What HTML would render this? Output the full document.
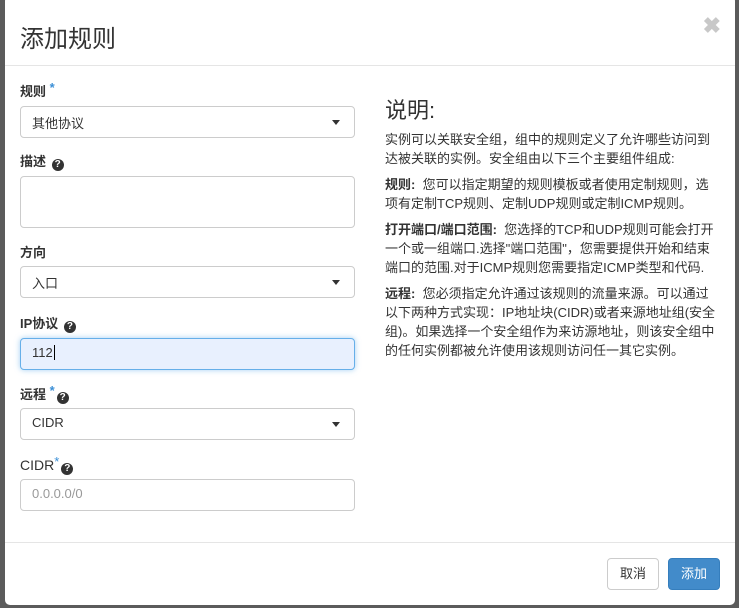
<!DOCTYPE html>
<html><head><meta charset="utf-8"><style>
*{box-sizing:border-box;margin:0;padding:0}
body{width:739px;height:608px;background:#5b5b5b;font-family:"Liberation Sans","Noto Sans CJK SC",sans-serif;color:#333;position:relative;overflow:hidden}
.modal{position:absolute;left:5px;top:-4px;width:730px;height:609px;background:#fff;border-radius:5px}
.hdr{position:absolute;left:0;top:0;width:100%;height:70px;border-bottom:1px solid #e5e5e5}
.hdr h1{position:absolute;left:15px;top:23px;font-size:24px;font-weight:normal;color:#333}
.close{position:absolute;right:14px;top:17px;font-size:22px;font-weight:bold;color:#c8c8c8}
.lbl{position:absolute;left:15px;font-size:13px;font-weight:bold;color:#333}
.star{color:#3b8fd6;font-size:13px;vertical-align:4px}
.q{display:inline-block;width:12px;height:12px;border-radius:50%;background:#333;color:#fff;font-size:10px;text-align:center;line-height:12px;vertical-align:-1px;font-weight:bold;margin-left:2px}
.inp{position:absolute;left:15px;width:335px;height:32px;border:1px solid #ccc;border-radius:4px;font-size:13px;padding:6px 11px;color:#333}
.caret{position:absolute;right:14px;top:13px;width:0;height:0;border-left:4px solid transparent;border-right:4px solid transparent;border-top:5px solid #333}
.focus{background:#e8f0fe;border-color:#66afe9;box-shadow:0 0 6px rgba(102,175,233,.6)}
.right{position:absolute;left:380px;top:100px;width:336px;font-size:13px;line-height:19px;color:#333}
.right h2{font-size:22px;font-weight:normal;margin-bottom:4px;line-height:30px}
.right p{margin-bottom:7px}
.ftr{position:absolute;left:0;top:546px;width:100%;border-top:1px solid #e5e5e5}
.btn{position:absolute;top:562px;height:32px;width:52px;border-radius:4px;font-size:13px;text-align:center;line-height:30px}
</style></head><body>
<div class="modal">
<div class="hdr"><h1>添加规则</h1><div class="close">✖</div></div>
<div class="lbl" style="top:84px">规则 <span class="star">*</span></div>
<div class="inp" style="top:110px">其他协议<span class="caret"></span></div>
<div class="lbl" style="top:155px">描述 <span class="q">?</span></div>
<div class="inp" style="top:180px;height:52px"></div>
<div class="lbl" style="top:246px">方向</div>
<div class="inp" style="top:270px">入口<span class="caret"></span></div>
<div class="lbl" style="top:317px">IP协议 <span class="q">?</span></div>
<div class="inp focus" style="top:342px">112<span style="border-left:1px solid #000;margin-left:1px"></span></div>
<div class="lbl" style="top:387px">远程 <span class="star">*</span><span class="q">?</span></div>
<div class="inp" style="top:412px">CIDR<span class="caret"></span></div>
<div class="lbl" style="top:458px;font-weight:normal;font-size:14px">CIDR<span class="star">*</span><span class="q">?</span></div>
<div class="inp" style="top:483px;color:#999">0.0.0.0/0</div>
<div class="right">
<h2>说明:</h2>
<p>实例可以关联安全组，组中的规则定义了允许哪些访问到<br>达被关联的实例。安全组由以下三个主要组件组成:</p>
<p><b>规则:</b>&nbsp; 您可以指定期望的规则模板或者使用定制规则，选<br>项有定制TCP规则、定制UDP规则或定制ICMP规则。</p>
<p><b>打开端口/端口范围:</b>&nbsp; 您选择的TCP和UDP规则可能会打开<br>一个或一组端口.选择"端口范围"，您需要提供开始和结束<br>端口的范围.对于ICMP规则您需要指定ICMP类型和代码.</p>
<p><b>远程:</b>&nbsp; 您必须指定允许通过该规则的流量来源。可以通过<br>以下两种方式实现：IP地址块(CIDR)或者来源地址组(安全<br>组)。如果选择一个安全组作为来访源地址，则该安全组中<br>的任何实例都被允许使用该规则访问任一其它实例。</p>
</div>
<div class="ftr"></div>
<div class="btn" style="left:602px;border:1px solid #ccc;color:#333">取消</div>
<div class="btn" style="left:663px;background:#428bca;border:1px solid #357ebd;color:#fff">添加</div>
</div>
</body></html>
